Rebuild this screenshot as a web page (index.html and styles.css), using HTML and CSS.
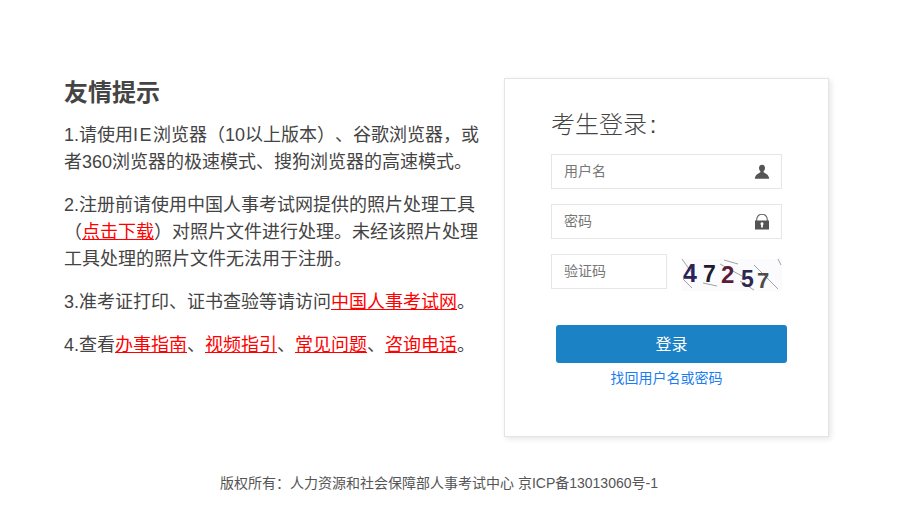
FILE: index.html
```html
<!DOCTYPE html>
<html lang="zh-CN">
<head>
<meta charset="utf-8">
<title>考生登录</title>
<link rel="stylesheet" href="styles.css">
</head>
<body>
<main class="page">
  <div class="content">
    <section class="tips">
      <h2 class="tips-title">友情提示</h2>
      <p class="tip">1.请使用<span class="latin-wide">IE</span>浏览器（10以上版本）、谷歌浏览器，或者360浏览器的极速模式、搜狗浏览器的高速模式。</p>
      <p class="tip">2.注册前请使用中国人事考试网提供的照片处理工具（<a class="tip-link" href="#">点击下载</a>）对照片文件进行处理。未经该照片处理工具处理的照片文件无法用于注册。</p>
      <p class="tip">3.准考证打印、证书查验等请访问<a class="tip-link" href="#">中国人事考试网</a>。</p>
      <p class="tip">4.查看<a class="tip-link" href="#">办事指南</a>、<a class="tip-link" href="#">视频指引</a>、<a class="tip-link" href="#">常见问题</a>、<a class="tip-link" href="#">咨询电话</a>。</p>
    </section>
    <section class="panel">
      <h3 class="panel-title">考生登录 :</h3>
      <div class="field">
        <span class="field-text">用户名</span>
        <svg class="field-icon" width="16" height="16" viewBox="0 0 16 16"><path fill="#555" d="M8 .8C6 .8 5 2.200 5 3.900c0 1.300.5 2.500 1.300 3.200.2.600.1 1-.3 1.300C5 9.300 1.200 10 .8 14.800h14.400C14.800 10 11 9.300 10 8.400c-.4-.3-.5-.7-.3-1.300C10.500 6.400 11 5.200 11 3.900 11 2.200 10 .8 8 .8z"/></svg>
      </div>
      <div class="field">
        <span class="field-text">密码</span>
        <svg class="field-icon" width="16" height="16" viewBox="0 0 16 16"><path fill="none" stroke="#666" stroke-width="1.100" d="M2.700 7V5.500a5.300 5.300 0 0 1 10.600 0V7"/><path fill="#555" fill-rule="evenodd" d="M1 6.500h14V15.500H1zM8 8.300a1.500 1.500 0 0 0-.9 2.700V13.500h1.800V11A1.500 1.500 0 0 0 8 8.300z"/></svg>
      </div>
      <div class="captcha-row">
        <div class="field field-short"><span class="field-text">验证码</span></div>
        <svg class="captcha" width="100" height="32" viewBox="0 0 100 32">
          <g fill="none" stroke="#8a8a8a" stroke-width=".8">
            <path d="M0 0l10 14M1 20l9 9"/><path d="M21 24l14 3"/><path d="M38 5l22 12"/><path d="M58 22l14 9"/><path d="M72 6l24 24"/><path d="M96 0l3 6"/><path d="M42 1l14 4"/>
          </g>
          <g class="captcha-text">
            <text x="1" y="23" fill="#2b2358" font-size="25">4</text>
            <text x="21" y="23" fill="#1c1c2c" font-size="23">7</text>
            <text x="39" y="24" fill="#5c1c3c" font-size="24">2</text>
            <text x="59" y="28" fill="#2c2850" font-size="23">5</text>
            <text x="75" y="29" fill="#4c4c4c" font-size="22">7</text>
          </g>
        </svg>
      </div>
      <button class="submit" type="button">登录</button>
      <a class="recover" href="#">找回用户名或密码</a>
    </section>
  </div>
  <footer class="footer">版权所有：人力资源和社会保障部人事考试中心 京ICP备13013060号-1</footer>
</main>
</body>
</html>
```
FILE: styles.css
```css
* { box-sizing: border-box; }
html, body { margin: 0; padding: 0; background: #fff; }
body {
  font-family: "Liberation Sans", "Noto Sans CJK SC", sans-serif;
  color: #444;
  text-spacing-trim: space-all;
}
.page { width: 902px; height: 527px; padding-top: 78px; overflow: hidden; }
.content { display: flex; align-items: flex-start; padding-left: 64px; }
.tips { width: 416px; margin-right: 24px; padding-top: 1px; }
.tips-title {
  margin: 0;
  font-size: 24px;
  line-height: 28px;
  font-weight: 700;
  color: #444;
}
.tip {
  margin: 0 0 16px;
  font-size: 18px;
  line-height: 27px;
  color: #444;
}
.tips-title + .tip { margin-top: 15px; }
.tip-link { color: #f00; text-decoration: underline; }
.latin-wide { letter-spacing: 1.5px; }
.panel {
  width: 325px;
  height: 359px;
  padding: 27px 46px 0;
  background: #fff;
  border: 1px solid #e4e4e4;
  box-shadow: 2px 2px 6px rgba(0, 0, 0, .10);
}
.panel-title {
  margin: 0 0 14px;
  padding-top: 2px;
  height: 34px;
  font-size: 24px;
  line-height: 34px;
  font-weight: 300;
  word-spacing: -4px;
  color: #444;
}
.field {
  display: flex;
  align-items: center;
  justify-content: space-between;
  width: 231px;
  height: 35px;
  margin-bottom: 15px;
  padding: 0 11px 0 12px;
  border: 1px solid #e6e6e6;
  background: #fff;
}
.field-text { padding-bottom: 4px; font-size: 14px; color: #777; }
.field-icon { display: block; }
.captcha-row { display: flex; align-items: flex-start; width: 231px; justify-content: space-between; }
.field-short { width: 116px; margin-bottom: 0; }
.captcha { display: block; margin-top: 5px; background: #fbfbfd; overflow: visible; }
.captcha-text { font-family: "Liberation Sans", sans-serif; font-weight: 700; }
.submit {
  display: block;
  width: 231px;
  height: 38px;
  margin: 34px 0 0 5px;
  padding: 0 0 3px;
  border: 0;
  border-radius: 3px;
  background: #1b82c6;
  color: #fff;
  font-family: inherit;
  font-size: 16px;
}
.recover {
  display: block;
  width: 231px;
  margin-top: 6px;
  text-align: center;
  font-size: 14px;
  line-height: 18px;
  color: #1a7df0;
  text-decoration: none;
}
.footer {
  margin-top: 37px;
  padding-left: 220px;
  font-size: 14px;
  line-height: 18px;
  color: #555;
}
```
